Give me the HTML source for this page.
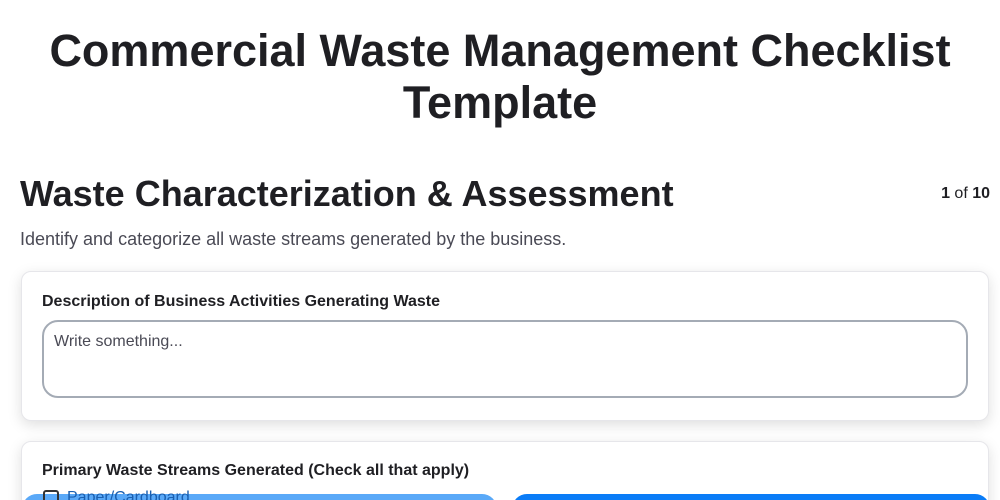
<!DOCTYPE html>
<html><head><style>
html,body{margin:0;width:1000px;height:500px;overflow:hidden}
body{background:#fff;font-family:"Liberation Sans",sans-serif;color:#1f1f23;position:relative}
h1{position:absolute;top:25px;left:0;width:1000px;margin:0;text-align:center;font-size:45px;line-height:52px;font-weight:bold}
h2{position:absolute;top:173px;left:20px;margin:0;font-size:36px;font-weight:bold}
.pg{position:absolute;top:185px;right:10px;font-size:16px}
.sub{position:absolute;top:229px;left:20px;font-size:18px;color:#4a4a55}
.card{position:absolute;left:21px;width:966px;background:#fff;border:1px solid #e6e6ea;border-radius:10px;box-shadow:0 4px 14px rgba(0,0,0,.13)}
.lbl{position:absolute;left:20px;font-size:16px;font-weight:bold}
.ta{position:absolute;left:20px;top:48px;border:2px solid #a4abb5;border-radius:16px;font-size:16px;color:#4a4a55;padding:11px 0 0 10px;box-sizing:border-box;width:926px;height:78px}
.b{position:absolute;top:494px;height:30px;border-radius:20px}
</style></head><body>
<h1>Commercial Waste Management Checklist<br>Template</h1>
<h2>Waste Characterization &amp; Assessment</h2>
<div class="pg"><b>1</b> of <b>10</b></div>
<div class="sub">Identify and categorize all waste streams generated by the business.</div>
<div class="card" style="top:271px;height:148px">
<div class="lbl" style="top:21px">Description of Business Activities Generating Waste</div>
<div class="ta">Write something...</div>
</div>
<div class="card" style="top:441px;height:80px">
<div class="lbl" style="top:20px">Primary Waste Streams Generated (Check all that apply)</div>
</div>
<div class="b" style="left:22px;width:475px;background:#5aa9f8"></div>
<div class="b" style="left:512px;width:478px;background:#0a7cf7"></div>
<div style="position:absolute;top:490px;left:43px;width:16px;height:16px;border:2px solid #333;border-radius:3px;box-sizing:border-box"></div>
<div style="position:absolute;top:489px;left:67px;font-size:16px;color:#1a5fb0">Paper/Cardboard</div>
</body></html>
